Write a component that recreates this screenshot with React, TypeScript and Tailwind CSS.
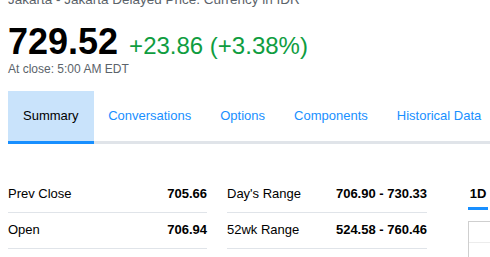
const tabs = ['Summary', 'Conversations', 'Options', 'Components', 'Historical Data'];

const left = [
  ['Prev Close', '705.66'],
  ['Open', '706.94'],
];

const right = [
  ["Day's Range", '706.90 - 730.33'],
  ['52wk Range', '524.58 - 760.46'],
];

function StatTable({ rows, width }: { rows: string[][]; width: string }) {
  return (
    <div className={`${width} shrink-0`}>
      {rows.map(([label, value]) => (
        <div
          key={label}
          className="flex h-[36px] items-center justify-between border-b border-[#e0e4e9] pb-px"
        >
          <span className="text-[#000]">{label}</span>
          <span className="font-bold text-[#000]">{value}</span>
        </div>
      ))}
    </div>
  );
}

export default function App() {
  return (
    <div
      className="h-[257px] w-[490px] overflow-hidden bg-white pl-[8px] whitespace-nowrap"
      style={{ fontFamily: '"Liberation Sans", Arial, sans-serif' }}
    >
      {/* Exchange line, cut at the top */}
      <div className="-mt-[8px] text-[13.5px] leading-[16px] text-[#5b636a]">
        Jakarta - Jakarta Delayed Price. Currency in IDR
      </div>

      {/* Quote */}
      <div className="mt-[14px] flex h-[40px] items-baseline leading-[40px]">
        <span className="text-[36px] font-bold text-black">729.52</span>
        <span className="ml-[11px] text-[24px] leading-[24px] text-[#0f9d3f]">+23.86 (+3.38%)</span>
      </div>
      <div className="-mt-[1px] text-[12px] leading-[16px] text-[#5b636a]">At close: 5:00 AM EDT</div>

      {/* Tabs */}
      <ul className="mt-[14px] flex border-b-[3px] border-[#e0e4e9] text-[13px]">
        {tabs.map((t, i) => (
          <li
            key={t}
            className={
              i === 0
                ? '-mb-[3px] flex h-[53px] shrink-0 items-center border-b-[3px] border-[#188fff] bg-[#c9e3fb] px-[15px] text-black'
                : '-mb-[3px] flex h-[53px] shrink-0 items-center border-b-[3px] border-transparent px-[14.5px] text-[#188fff]'
            }
          >
            {t}
          </li>
        ))}
      </ul>

      {/* Stats + chart */}
      <div className="mt-[33px] flex text-[13px]">
        <StatTable rows={left} width="w-[199px]" />
        <div className="ml-[20px] shrink-0">
          <StatTable rows={right} width="w-[200px]" />
        </div>
        <div className="ml-[41px] mt-[7px] flex shrink-0 flex-col">
          <div className="w-[20px] border-b-[3px] border-[#188fff] pb-[3px] text-center font-bold text-black">
            1D
          </div>
          <div className="mt-[11px] h-[60px] w-[40px] border-t border-l border-[#cfcfcf]">
            <div className="h-[21px] border-b border-[#ececec]" />
          </div>
        </div>
      </div>
    </div>
  );
}
